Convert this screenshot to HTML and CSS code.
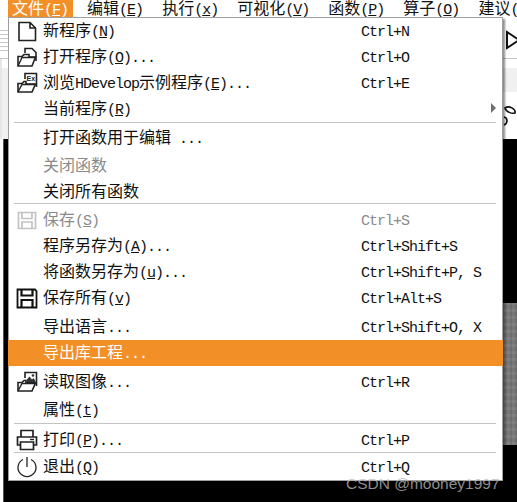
FILE: index.html
```html
<!DOCTYPE html>
<html lang="zh">
<head>
<meta charset="utf-8">
<title>HDevelop 文件菜单</title>
<link rel="stylesheet" href="styles.css">
</head>
<body>
<div class="app">
  <nav class="mbar">
    <span class="mitem active">文件<span class="lat">(<u>F</u>)</span></span>
    <span class="mitem">编辑<span class="lat">(<u>E</u>)</span></span>
    <span class="mitem">执行<span class="lat">(<u>x</u>)</span></span>
    <span class="mitem">可视化<span class="lat">(<u>V</u>)</span></span>
    <span class="mitem">函数<span class="lat">(<u>P</u>)</span></span>
    <span class="mitem">算子<span class="lat">(<u>O</u>)</span></span>
    <span class="mitem">建议<span class="lat">(<u>S</u>)</span></span>
  </nav>
  <div class="toolbar">
    <div class="ticks"></div>
    <svg class="play" width="12" height="20" viewBox="0 0 12 20"><path d="M2 2V18L14 10Z" fill="#fff" stroke="#111" stroke-width="2"/></svg>
  </div>
  <div class="panel">
    <div class="tabstrip"></div>
    <svg class="scissor" width="14" height="22" viewBox="0 0 14 22"><path d="M2 3C6 0 13 4 12 8C9 9 3 7 2 3ZM1 12C5 13 5 18 1 20" fill="none" stroke="#111" stroke-width="1.6"/></svg>
  </div>
  <div class="view"><div class="noise"></div></div>
</div>

<div class="menu">
  <div class="item">
    <svg class="ico" width="22" height="22" viewBox="0 0 22 22"><path d="M3 2.5H14L19.5 8V20.5H3ZM14 2.5V8H19.5" fill="#fff" stroke="#222" stroke-width="1.6"/></svg>
    <span class="label">新程序<span class="lat">(<u>N</u>)</span></span><span class="key">Ctrl+N</span>
  </div>
  <div class="item">
    <svg class="ico" width="22" height="22" viewBox="0 0 22 22"><path d="M9 7V2.5H16L20 6.5V15" fill="#fff" stroke="#222" stroke-width="1.6"/><path d="M2 20V10.5H6L8 8.5H13V11H19.5L16 20Z" fill="#fff" stroke="#222" stroke-width="1.6"/><path d="M2 20L6 11.5H19" fill="none" stroke="#222" stroke-width="1.4"/></svg>
    <span class="label">打开程序<span class="lat">(<u>O</u>)...</span></span><span class="key">Ctrl+O</span>
  </div>
  <div class="item">
    <svg class="ico" width="22" height="22" viewBox="0 0 22 22"><path d="M9 7V1.5H20.5V15" fill="#fff" stroke="#222" stroke-width="1.6"/><text class="ex" x="10.5" y="9">Ex</text><path d="M2 20V11.5H6L8 9.5H10V12H19.5L16 20Z" fill="#fff" stroke="#222" stroke-width="1.6"/><path d="M2 20L6 12.5H19" fill="none" stroke="#222" stroke-width="1.4"/></svg>
    <span class="label">浏览<span class="lat">HDevelop</span>示例程序<span class="lat">(<u>E</u>)...</span></span><span class="key">Ctrl+E</span>
  </div>
  <div class="item">
    <span class="ico"></span>
    <span class="label">当前程序<span class="lat">(<u>R</u>)</span></span><span class="key"></span>
    <span class="arrow"></span>
  </div>
  <div class="sep gap-b2"></div>
  <div class="item"><span class="ico"></span><span class="label">打开函数用于编辑<span class="lat"> ...</span></span><span class="key"></span></div>
  <div class="item off"><span class="ico"></span><span class="label">关闭函数</span><span class="key"></span></div>
  <div class="item"><span class="ico"></span><span class="label">关闭所有函数</span><span class="key"></span></div>
  <div class="sep gap-b3"></div>
  <div class="item off">
    <svg class="ico" width="22" height="22" viewBox="0 0 22 22"><path d="M2.5 3.5H19.5V19.5H2.5ZM6 3.5V9.5H16V3.5M6 19.5V13H16V19.5" fill="none" stroke="#c2c2c2" stroke-width="1.7"/></svg>
    <span class="label">保存<span class="lat">(<u>S</u>)</span></span><span class="key">Ctrl+S</span>
  </div>
  <div class="item"><span class="ico"></span><span class="label">程序另存为<span class="lat">(<u>A</u>)...</span></span><span class="key">Ctrl+Shift+S</span></div>
  <div class="item"><span class="ico"></span><span class="label">将函数另存为<span class="lat">(<u>u</u>)...</span></span><span class="key">Ctrl+Shift+P, S</span></div>
  <div class="item">
    <svg class="ico" width="22" height="22" viewBox="0 0 22 22"><path d="M1.5 2.5H19L20.5 4V20.5H1.5Z" fill="#fff" stroke="#111" stroke-width="1.8"/><path d="M5.5 2.5V8.5H16.5V2.5M5.5 20.5V13H16.5V20.5" fill="none" stroke="#111" stroke-width="2.2"/></svg>
    <span class="label">保存所有<span class="lat">(<u>v</u>)</span></span><span class="key">Ctrl+Alt+S</span>
  </div>
  <div class="item gap-t3"><span class="ico"></span><span class="label">导出语言<span class="lat">...</span></span><span class="key">Ctrl+Shift+O, X</span></div>
  <div class="item hot"><span class="ico"></span><span class="label">导出库工程<span class="lat">...</span></span><span class="key"></span></div>
  <div class="item gap-t3">
    <svg class="ico" width="22" height="22" viewBox="0 0 22 22"><path d="M9 7V1.5H20.5V15" fill="#fff" stroke="#222" stroke-width="1.6"/><path d="M10.5 9L13.5 5.5L16 8.5L17.5 7L19.5 10V12H11Z" fill="#333"/><circle cx="17" cy="4.5" r="1.3" fill="#333"/><path d="M2 20V11.5H6L8 9.5H10V12H19.5L16 20Z" fill="#fff" stroke="#222" stroke-width="1.6"/><path d="M2 20L6 12.5H19" fill="none" stroke="#222" stroke-width="1.4"/></svg>
    <span class="label">读取图像<span class="lat">...</span></span><span class="key">Ctrl+R</span>
  </div>
  <div class="item gap-t2"><span class="ico"></span><span class="label">属性<span class="lat">(<u>t</u>)</span></span><span class="key"></span></div>
  <div class="sep gap-b2"></div>
  <div class="item nudge">
    <svg class="ico" width="22" height="22" viewBox="0 0 22 22"><path d="M5 8V1.5H17V8" fill="none" stroke="#222" stroke-width="1.7"/><path d="M4.5 16H1.5V8H20.5V16H17.5" fill="none" stroke="#222" stroke-width="1.7"/><path d="M4.5 13H17.5V20.5H4.5Z" fill="none" stroke="#222" stroke-width="1.7"/><path d="M14 10.5H18" stroke="#222" stroke-width="1.4"/></svg>
    <span class="label">打印<span class="lat">(<u>P</u>)...</span></span><span class="key">Ctrl+P</span>
  </div>
  <div class="sep gap-b1"></div>
  <div class="item">
    <svg class="ico" width="22" height="22" viewBox="0 0 22 22"><path d="M7 3.5A9 9 0 1 0 15 3.5" fill="none" stroke="#222" stroke-width="1.3"/><path d="M11 1V11" stroke="#222" stroke-width="1.3"/></svg>
    <span class="label">退出<span class="lat">(<u>Q</u>)</span></span><span class="key">Ctrl+Q</span>
  </div>
</div>

<div class="mark">CSDN @mooney1997</div>
</body>
</html>
```
FILE: styles.css
```css
* { box-sizing: border-box; }
html, body { margin: 0; padding: 0; }
body {
  width: 517px;
  height: 502px;
  position: relative;
  overflow: hidden;
  background: #fff;
  font-family: "Noto Sans CJK SC", sans-serif;
  font-size: 16px;
  color: #111;
}
.lat {
  font-family: "Liberation Mono", monospace;
  font-size: 15px;
  letter-spacing: -1px;
  white-space: pre;
}
u { text-underline-offset: 1px; }

.app { width: 517px; height: 502px; display: flex; flex-direction: column; }

.mbar {
  height: 17px;
  flex: none;
  display: flex;
  gap: 19px;
  padding-left: 8px;
  background: #fff;
  overflow: hidden;
  white-space: nowrap;
}
.mitem { line-height: 14px; height: 17px; }
.mitem.active {
  background: #f28f27;
  color: #fff;
  padding: 0 5px 0 4px;
  margin-right: -5px;
}

.toolbar {
  height: 42px;
  flex: none;
  display: flex;
  justify-content: space-between;
  align-items: flex-start;
  border-bottom: 1px solid #c4c4c4;
  padding-top: 13px;
}
.ticks {
  width: 8px;
  height: 22px;
  background: repeating-linear-gradient(to bottom, #c8c8c8 0 1px, transparent 1px 4px);
}
.play { flex: none; }

.panel {
  height: 80px;
  flex: none;
  display: flex;
  justify-content: space-between;
  padding-top: 9px;
  position: relative;
  border-left: 2px solid #e6e6e6;
}
.tabstrip { width: 6px; height: 71px; background: #f0f0f0; }
.scissor { margin-top: 37px; }
.panel::after {
  content: "";
  position: absolute;
  right: 0;
  top: 9px;
  width: 14px;
  height: 24px;
  background: #f0f0f0;
}

.view {
  flex: 1;
  margin-left: 3px;
  background: #000;
  border-left: 1px solid #555;
  display: flex;
  justify-content: flex-end;
  align-items: flex-start;
}
.noise {
  width: 27px;
  height: 142px;
  margin-top: 164px;
  background-color: #777;
  background-image:
    repeating-linear-gradient(90deg, rgba(0,0,0,.09) 0 2px, transparent 2px 5px),
    repeating-linear-gradient(0deg, rgba(255,255,255,.07) 0 3px, transparent 3px 7px);
}

/* dropdown over the window */
.menu {
  position: absolute;
  left: 8px;
  top: 17px;
  width: 495px;
  height: 464px;
  background: #fff;
  border: 1px solid #a0a0a0;
  box-shadow: 2px 2px 2px rgba(0,0,0,.45);
}
.item {
  height: 26px;
  display: flex;
  align-items: center;
  position: relative;
  white-space: nowrap;
}
.nudge { padding-top: 2px; }
.ico { flex: none; width: 22px; height: 22px; margin: 0 5px 0 7px; display: block; }
.ex { font: bold 7px "Liberation Sans", sans-serif; fill: #222; }
.label { width: 318px; flex: none; line-height: 26px; }
.key {
  font-family: "Liberation Mono", monospace;
  font-size: 15px;
  letter-spacing: -1px;
  white-space: pre;
  margin-top: 2px;
}
.off { color: #8a8a8a; }
.hot { background: #f28f27; color: #fff; margin: 0 -1px; padding-left: 1px; }
.arrow {
  position: absolute;
  left: 482px;
  top: 7px;
  border-left: 5px solid #707070;
  border-top: 5px solid transparent;
  border-bottom: 5px solid transparent;
}
.sep { height: 1px; margin: 0 6px 0 5px; background: #c4c4c4; }
.gap-b1 { margin-bottom: 1px; }
.gap-b2 { margin-bottom: 2px; }
.gap-b3 { margin-bottom: 3px; }
.gap-t2 { margin-top: 2px; }
.gap-t3 { margin-top: 3px; }

.mark {
  position: absolute;
  left: 346px;
  top: 474px;
  font: 15.5px/20px "Liberation Sans", sans-serif;
  color: rgba(190,190,190,.75);
  white-space: nowrap;
}
```
